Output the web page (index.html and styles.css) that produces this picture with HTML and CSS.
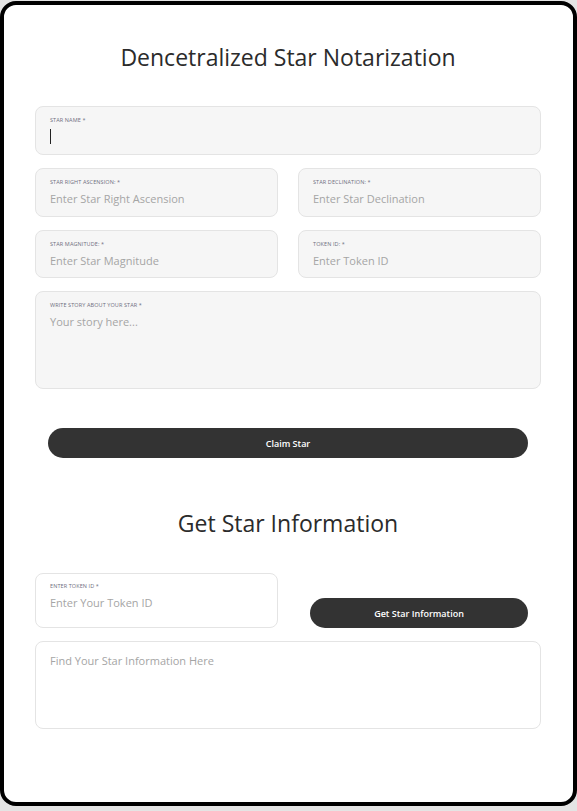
FILE: index.html
```html
<!DOCTYPE html>
<html>
<head>
<meta charset="utf-8">
<link rel="stylesheet" href="styles.css">
</head>
<body>
<div class="card">
  <h1 class="title">Dencetralized Star Notarization</h1>
  <div class="form">
    <div class="field field-full">
      <div class="label">Star Name *</div>
      <div class="value"><span class="caret"></span></div>
    </div>
    <div class="row">
      <div class="field">
        <div class="label">Star Right Ascension: *</div>
        <div class="value placeholder">Enter Star Right Ascension</div>
      </div>
      <div class="field">
        <div class="label">Star Declination: *</div>
        <div class="value placeholder">Enter Star Declination</div>
      </div>
    </div>
    <div class="row">
      <div class="field">
        <div class="label">Star Magnitude: *</div>
        <div class="value placeholder">Enter Star Magnitude</div>
      </div>
      <div class="field">
        <div class="label">Token ID: *</div>
        <div class="value placeholder">Enter Token ID</div>
      </div>
    </div>
    <div class="field field-story">
      <div class="label">Write story about your star *</div>
      <div class="value placeholder">Your story here...</div>
    </div>
  </div>
  <button class="btn btn-claim">Claim Star</button>

  <h2 class="title title-2">Get Star Information</h2>
  <div class="lookup">
    <div class="field field-white field-token">
      <div class="label">Enter Token ID *</div>
      <div class="value placeholder">Enter Your Token ID</div>
    </div>
    <button class="btn btn-get">Get Star Information</button>
  </div>
  <div class="field field-white field-result">
    <div class="value placeholder">Find Your Star Information Here</div>
  </div>
</div>
</body>
</html>
```
FILE: styles.css
```css
html, body {
  margin: 0;
  padding: 0;
  background: #e4e4e4;
}
body {
  font-family: "Open Sans", "Noto Sans", sans-serif;
  padding-top: 1px;
}
.card {
  box-sizing: border-box;
  width: 577px;
  height: 805px;
  background: #fff;
  border: 4px solid #000;
  border-radius: 16px;
  padding: 0 32px 0 31px;
}
.title {
  margin: 0;
  padding-top: 35px;
  height: 66px;
  box-sizing: border-box;
  text-align: center;
  font-weight: 400;
  font-size: 23px;
  line-height: 34px;
  color: #2b2b2b;
}
.form {
  margin-top: 35px;
  display: flex;
  flex-direction: column;
  gap: 13px;
}
.row {
  display: grid;
  grid-template-columns: 1fr 1fr;
  gap: 20px;
}
.field {
  box-sizing: border-box;
  height: 48.5px;
  background: #f6f6f6;
  border: 1px solid #e4e4e4;
  border-radius: 8px;
  padding: 9px 14px 0 14px;
}
.field-full { height: 49px; }
.field-story { height: 98px; }
.label {
  font-size: 5.5px;
  line-height: 8px;
  text-transform: uppercase;
  color: #6f6f80;
  letter-spacing: 0.1px;
}
.value {
  margin-top: 5px;
  font-size: 11px;
  line-height: 16px;
  height: 16px;
  color: #333;
}
.placeholder { color: #a5a5a5; }
.caret {
  display: inline-block;
  width: 1px;
  height: 15px;
  margin-top: 0;
  background: #222;
  vertical-align: top;
}
.btn {
  display: block;
  box-sizing: border-box;
  height: 30px;
  border: none;
  border-radius: 15px;
  background: #333;
  color: #fff;
  font-family: inherit;
  font-size: 9px;
  font-weight: 600;
  cursor: pointer;
}
.btn-claim {
  margin: 39px 13px 0 13px;
  width: calc(100% - 26px);
}
.title-2 {
  padding-top: 0;
  margin-top: 48px;
  height: 34px;
}
.lookup {
  margin-top: 33px;
  display: grid;
  grid-template-columns: 1fr 1fr;
  gap: 20px;
  align-items: end;
}
.field-white { background: #fff; }
.field-token { height: 55px; padding-top: 8px; }
.btn-get {
  margin: 0 13px 0 12px;
  width: calc(100% - 25px);
}
.field-result {
  margin-top: 13px;
  height: 88px;
  padding-top: 11px;
}
.field-result .value { margin-top: 0; }
```
